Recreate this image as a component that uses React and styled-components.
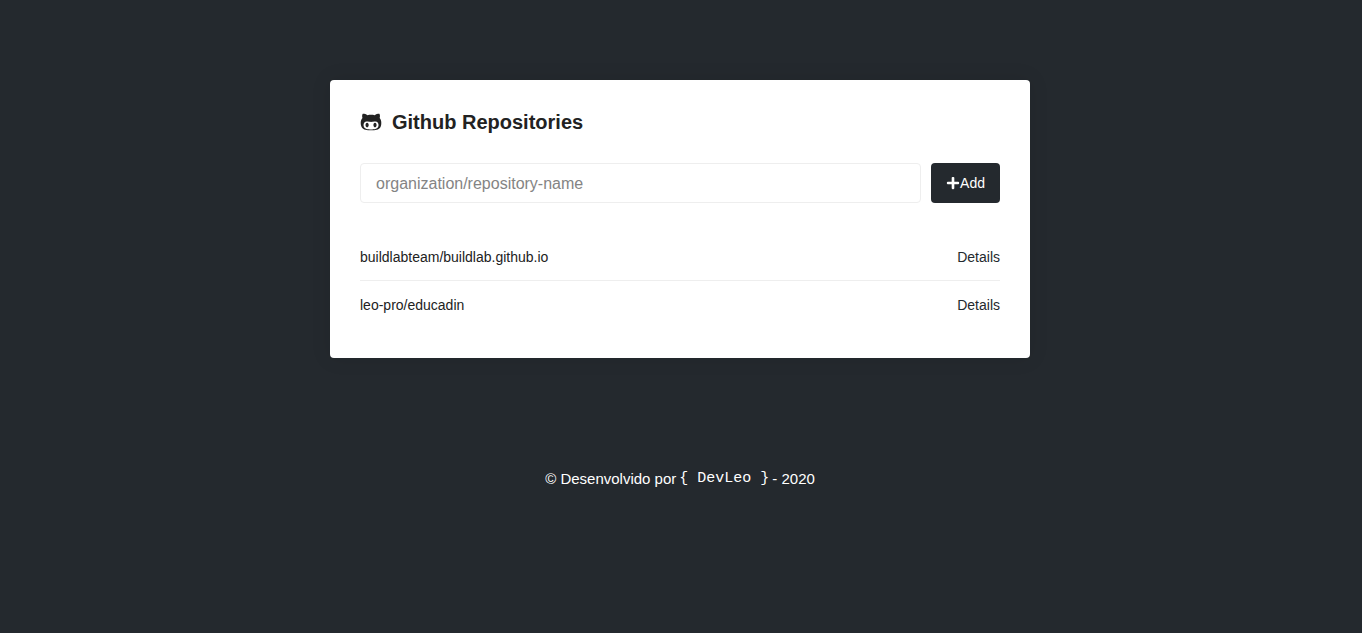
import React from "react";
import styled, { createGlobalStyle } from "styled-components";
import { FaGithubAlt, FaPlus } from "react-icons/fa";

const GlobalStyle = createGlobalStyle`
  * {
    margin: 0;
    padding: 0;
    box-sizing: border-box;
  }
  body {
    padding-right: 2px;
    background: #24292e;
    color: #222;
    font: 14px "Liberation Sans", Arial, Helvetica, sans-serif;
    -webkit-font-smoothing: antialiased;
  }
  button, input {
    font-family: inherit;
  }
`;

const Container = styled.main`
  max-width: 700px;
  margin: 80px auto;
  padding: 30px;
  background: #fff;
  border-radius: 4px;
  box-shadow: 0 0 20px rgba(0, 0, 0, 0.1);
`;

const Title = styled.h1`
  display: flex;
  align-items: center;
  gap: 10px;
  font-size: 20px;
  line-height: 24px;
`;

const Form = styled.form`
  display: flex;
  gap: 10px;
  margin-top: 29px;
`;

const RepoInput = styled.input`
  flex: 1;
  min-width: 0;
  height: 40px;
  padding: 11px 15px 9px;
  border: 1px solid #eee;
  border-radius: 4px;
  font-size: 16px;
  &::placeholder {
    color: #848484;
  }
`;

const AddButton = styled.button`
  display: flex;
  align-items: center;
  justify-content: center;
  padding: 0 15px;
  border: 0;
  border-radius: 4px;
  background: #24292e;
  color: #fff;
  font-size: 14px;
  cursor: pointer;
`;

const List = styled.ul`
  margin-top: 30px;
  list-style: none;
`;

const Item = styled.li`
  display: flex;
  align-items: center;
  justify-content: space-between;
  padding: 16px 0 15px;
  line-height: 16px;
  & + & {
    border-top: 1px solid #eee;
  }
`;

const DetailsLink = styled.a`
  color: #24292e;
  text-decoration: none;
`;

const Footer = styled.footer`
  display: flex;
  align-items: center;
  justify-content: center;
  gap: 3px;
  margin-top: 112px;
  color: #fff;
  font-size: 15px;
`;

const Author = styled.a`
  color: #fff;
  font: 15px "Liberation Mono", "Courier New", monospace;
  text-decoration: none;
`;

const repositories = ["buildlabteam/buildlab.github.io", "leo-pro/educadin"];

export default function App() {
  return (
    <>
      <GlobalStyle />
      <Container>
        <Title>
          <FaGithubAlt size={22} aria-hidden="true" />
          Github Repositories
        </Title>
        <Form onSubmit={(e) => e.preventDefault()}>
          <RepoInput
            type="text"
            aria-label="Repository"
            placeholder="organization/repository-name"
          />
          <AddButton type="submit">
            <FaPlus size={14} aria-hidden="true" />
            Add
          </AddButton>
        </Form>
        <List>
          {repositories.map((name) => (
            <Item key={name}>
              <span>{name}</span>
              <DetailsLink href={`#${name}`}>Details</DetailsLink>
            </Item>
          ))}
        </List>
      </Container>
      <Footer>
        <span>© Desenvolvido por</span>
        <Author href="#devleo">{"{ DevLeo }"}</Author>
        <span>- 2020</span>
      </Footer>
    </>
  );
}
